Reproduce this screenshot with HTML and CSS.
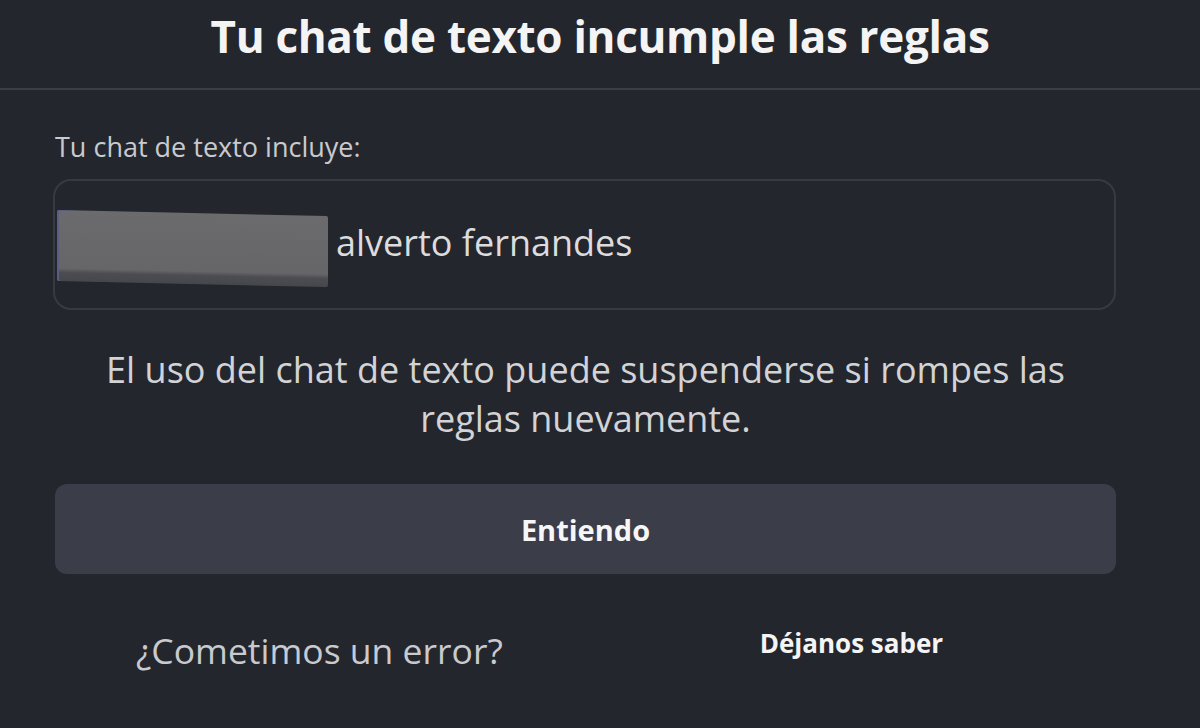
FILE: index.html
```html
<!DOCTYPE html>
<html lang="es">
<head>
<meta charset="utf-8">
<link rel="stylesheet" href="styles.css">
</head>
<body>
<div class="modal">
  <header class="head">
    <h1 class="title">Tu chat de texto incumple las reglas</h1>
  </header>
  <section class="content">
    <p class="label">Tu chat de texto incluye:</p>
    <div class="quote">
      <span class="redact" aria-hidden="true"></span>
      <span class="msg">alverto fernandes</span>
    </div>
    <p class="warn">El uso del chat de texto puede suspenderse si rompes las reglas nuevamente.</p>
    <button class="btn">Entiendo</button>
    <div class="foot">
      <span class="ask">¿Cometimos un error?</span>
      <a class="link">Déjanos saber</a>
    </div>
  </section>
</div>
</body>
</html>
```
FILE: styles.css
```css
html, body {
  margin: 0;
  padding: 0;
  background: #24262d;
  height: 100%;
}
body {
  font-family: "Open Sans", "Noto Sans", sans-serif;
  color: #d6d7da;
  overflow: hidden;
}
.modal {
  width: 1200px;
  height: 728px;
}
.head {
  height: 90px;
  border-bottom: 2px solid #3c3e46;
  box-sizing: border-box;
  display: flex;
  justify-content: center;
}
.title {
  margin: 0;
  padding-top: 8px;
  font-size: 44px;
  font-weight: 700;
  color: #f4f4f5;
  line-height: 56px;
  letter-spacing: -0.3px;
}
.content {
  padding: 0 84px 0 53px;
  display: flex;
  flex-direction: column;
}
.label {
  margin: 40px 0 0 2px;
  font-size: 27px;
  line-height: 34px;
  color: #c9cacd;
}
.quote {
  margin-top: 15px;
  height: 131px;
  border: 2px solid #383a42;
  border-radius: 18px;
  box-sizing: border-box;
  display: flex;
  align-items: center;
  padding-left: 2px;
}
.redact {
  width: 271px;
  height: 71px;
  background: linear-gradient(180deg, #6b6b6d 0%, #666668 82%, #4c4d52 88%, #46474c 100%);
  border-radius: 2px;
  margin-top: 8px;
  transform: skewY(1.3deg);
  box-shadow: inset 2px 0 0 #5a5e80;
}
.msg {
  margin-left: 8px;
  font-size: 36px;
  color: #dcdcde;
  margin-top: -4px;
}
.warn {
  margin: 35px 0 0 2px;
  text-align: center;
  font-size: 36px;
  line-height: 49px;
  color: #d2d3d6;
  padding: 0 30px;
}
.btn {
  margin: 41px 0 0 2px;
  height: 90px;
  border: none;
  border-radius: 12px;
  background: #3b3d48;
  color: #f6f6f7;
  font-family: inherit;
  font-size: 29px;
  font-weight: 700;
  padding: 0;
}
.foot {
  margin-top: 52px;
  display: flex;
  align-items: flex-start;
}
.ask {
  margin-left: 83px;
  font-size: 35.5px;
  line-height: 49px;
  color: #c9cacd;
}
.link {
  margin-left: 257px;
  margin-top: 0px;
  font-size: 26px;
  line-height: 35px;
  font-weight: 700;
  color: #f4f4f5;
}
```
